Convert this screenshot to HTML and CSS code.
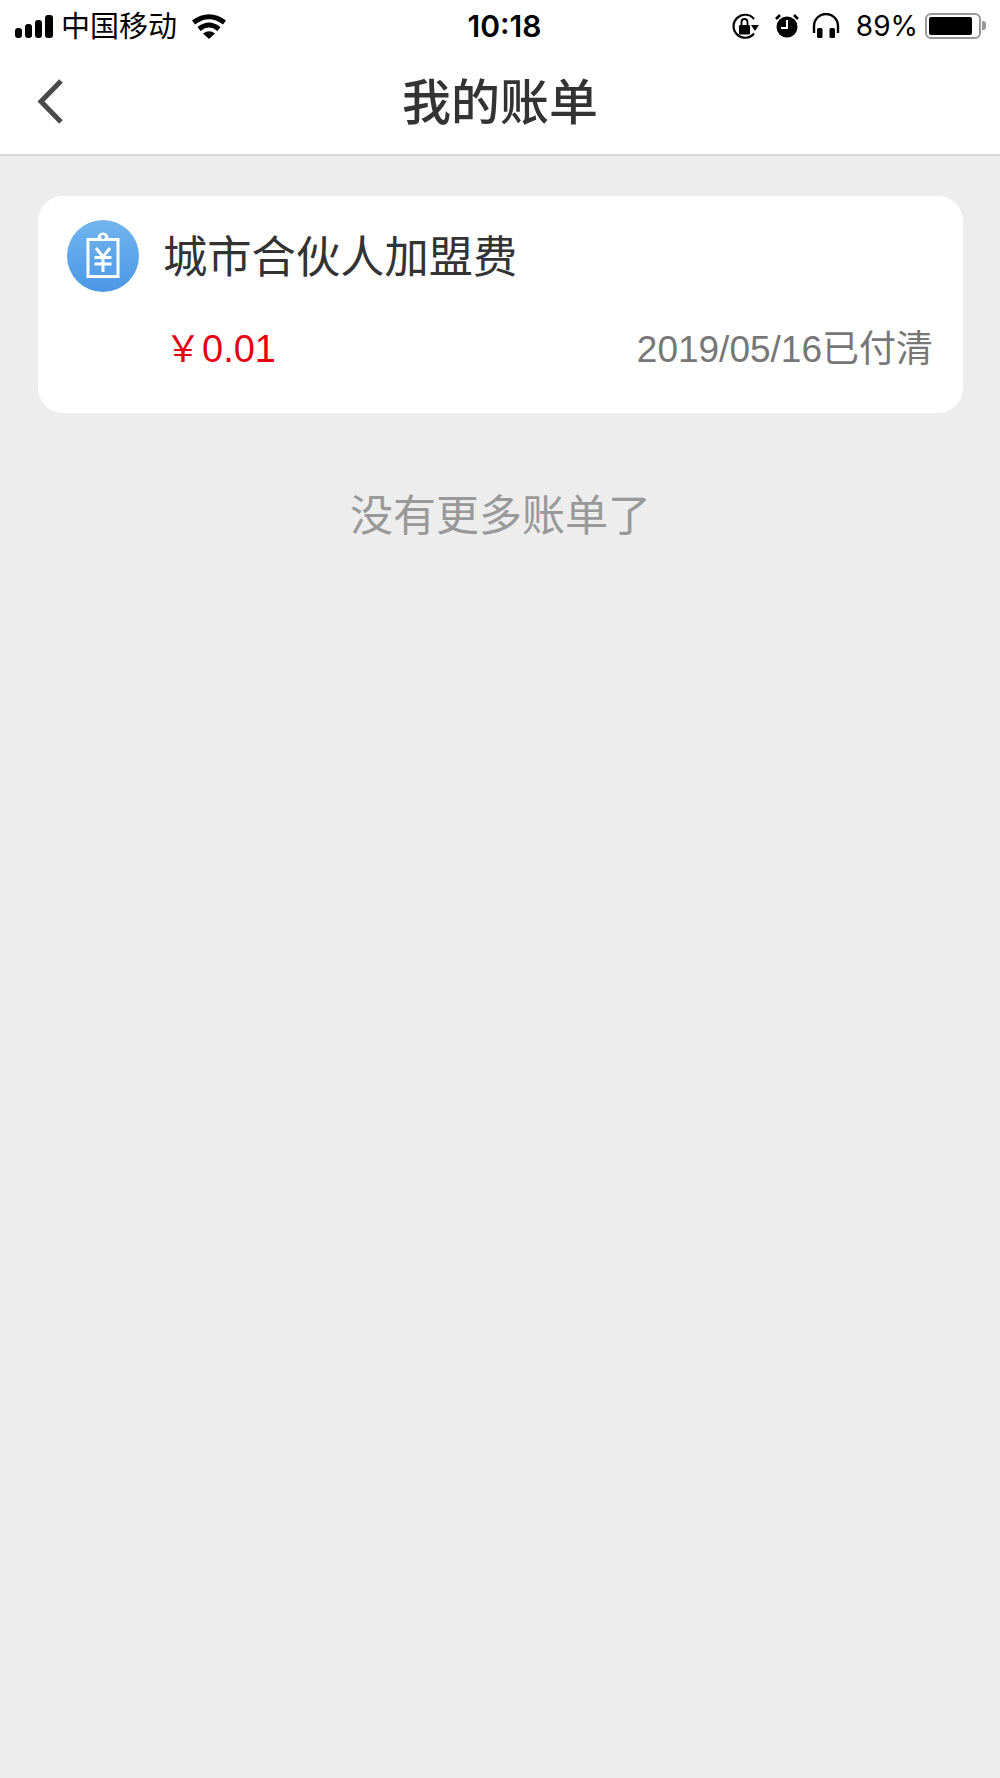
FILE: index.html
```html
<!DOCTYPE html>
<html lang="en">
<head>
    <meta charset="UTF-8">
    <meta name="viewport" content="width=device-width, initial-scale=1.0">
    <title>我的账单</title>
    <link rel="stylesheet" href="styles.css">
</head>
<body>
    <div class="status-bar">
        <div class="status-left">
            <svg class="signal" width="38" height="26" viewBox="0 0 38 26">
                <rect x="0" y="14" width="7" height="10" rx="3"/>
                <rect x="10" y="10" width="7" height="14" rx="3"/>
                <rect x="20" y="6" width="7" height="18" rx="3"/>
                <rect x="30" y="1" width="8" height="23" rx="3"/>
            </svg>
            <span class="carrier">中国移动</span>
            <svg class="wifi" width="34" height="26" viewBox="0 0 34 26">
                <path d="M1.500 8.500 Q17 -3 32.500 8.500" fill="none" stroke="#000" stroke-width="5"/>
                <path d="M7 15 Q17 7 27 15" fill="none" stroke="#000" stroke-width="5"/>
                <path d="M11 19.500 Q17 15 23 19.500 L17 25 Z"/>
            </svg>
        </div>
        <div class="status-time">10:18</div>
        <div class="status-right">
            <svg class="lock" width="29" height="26" viewBox="0 0 29 26">
                <path d="M23 6 A11.500 11.500 0 1 0 23 20.500" fill="none" stroke="#000" stroke-width="2.200"/>
                <path d="M20 12 L28 12 L24 18 Z"/>
                <rect x="8" y="12" width="11" height="9.500" rx="1.200"/>
                <path d="M10.500 12 V9 A3 3 0 0 1 16.500 9 V12" fill="none" stroke="#000" stroke-width="1.800"/>
            </svg>
            <svg class="alarm" width="24" height="26" viewBox="0 0 24 26">
                <circle cx="12" cy="14" r="10.500"/>
                <path d="M1 6 L5 2 M23 6 L19 2" stroke="#000" stroke-width="2.600"/>
                <path d="M12 7 V15 H6" fill="none" stroke="#fff" stroke-width="2"/>
            </svg>
            <svg class="phones" width="28" height="26" viewBox="0 0 28 26">
                <path d="M2 20 V13 A12 12 0 0 1 26 13 V20" fill="none" stroke="#000" stroke-width="2.400"/>
                <rect x="5" y="15" width="5.500" height="10" rx="1.500"/>
                <rect x="17.500" y="15" width="5.500" height="10" rx="1.500"/>
            </svg>
            <span class="battery-pct">89%</span>
            <div class="battery">
                <div class="battery-level"></div>
            </div>
            <div class="battery-tip"></div>
        </div>
    </div>

    <div class="nav-bar">
        <svg class="back" width="28" height="48" viewBox="0 0 28 48">
            <path d="M25 3 L5 23.500 L25 44" fill="none" stroke="#4a4a4a" stroke-width="5"/>
        </svg>
        <h1 class="nav-title">我的账单</h1>
    </div>

    <div class="content">
        <div class="bill-card">
            <div class="bill-top">
                <div class="bill-icon">
                    <svg width="42" height="48" viewBox="0 0 42 48">
                        <rect x="6" y="7.500" width="30" height="37" fill="none" stroke="#fff" stroke-width="3"/>
                        <path d="M13 9 V6 H15.500 A5.500 5.500 0 0 1 26.500 6 H29 V9 Z" fill="#fff"/>
                        <circle cx="21" cy="5" r="2" fill="#62adee"/>
                        <path d="M14 16 L21 25 L28 16 M12.500 25.500 H29.500 M12.500 32 H29.500 M21 25 V40" fill="none" stroke="#fff" stroke-width="3"/>
                    </svg>
                </div>
                <div class="bill-name">城市合伙人加盟费</div>
            </div>
            <div class="bill-bottom">
                <span class="bill-amount"><span class="yen">￥</span>0.01</span>
                <span class="bill-date">2019/05/16已付清</span>
            </div>
        </div>
        <p class="no-more">没有更多账单了</p>
    </div>
</body>
</html>
```

FILE: styles.css
```css
* {
    box-sizing: border-box;
}
html, body {
    margin: 0;
    padding: 0;
}
body {
    width: 1000px;
    height: 1778px;
    overflow: hidden;
    background-color: #ededed;
    font-family: "Liberation Sans", "Noto Sans CJK SC", sans-serif;
}
.status-bar {
    display: grid;
    grid-template-columns: 1fr auto 1fr;
    align-items: center;
    height: 50px;
    padding: 0 0 2px 15px;
    background-color: #fff;
    color: #000;
}
.status-left, .status-right {
    display: flex;
    align-items: center;
}
.status-left {
    padding-top: 3px;
}
.status-right {
    justify-content: flex-end;
    padding-right: 14px;
}
.carrier {
    margin-left: 8px;
    font-size: 29px;
    line-height: 48px;
}
.wifi {
    margin-left: 15px;
}
.status-time {
    margin-right: 6px;
    padding-top: 1px;
    font-family: "Inter", sans-serif;
    font-size: 30px;
    font-weight: 600;
}
.alarm {
    margin-left: 15px;
}
.phones {
    margin-left: 13px;
}
.battery-pct {
    margin-left: 16px;
    font-family: "Inter", sans-serif;
    font-size: 28px;
    font-weight: 400;
}
.battery {
    margin-left: 7px;
    width: 56px;
    height: 26px;
    padding: 2px;
    border: 2px solid #999;
    border-radius: 6px;
}
.battery-level {
    width: 43px;
    height: 100%;
    background-color: #000;
    border-radius: 2px;
}
.battery-tip {
    width: 4px;
    height: 9px;
    margin-left: 1px;
    background-color: #999;
    border-radius: 0 3px 3px 0;
}
.nav-bar {
    display: grid;
    grid-template-columns: 1fr auto 1fr;
    align-items: center;
    height: 106px;
    background-color: #fff;
    border-bottom: 2px solid #d6d6d6;
}
.back {
    margin-left: 36px;
    margin-bottom: 1px;
}
.nav-title {
    margin: 0;
    padding-bottom: 7px;
    font-size: 49px;
    font-weight: 500;
    color: #333;
}
.content {
    padding: 40px 37px 0 38px;
}
.bill-card {
    height: 217px;
    padding: 24px 30px 0 29px;
    background-color: #fff;
    border-radius: 25px;
}
.bill-top {
    display: flex;
    align-items: center;
}
.bill-icon {
    display: flex;
    align-items: center;
    justify-content: center;
    width: 72px;
    height: 72px;
    border-radius: 50%;
    background: linear-gradient(#72b6ef, #4a97e6);
}
.bill-name {
    margin-left: 24px;
    padding-bottom: 4px;
    font-size: 44.300px;
    color: #333;
}
.bill-bottom {
    display: flex;
    justify-content: space-between;
    align-items: center;
    margin-top: 27px;
    padding-left: 98px;
}
.bill-amount {
    font-size: 38px;
    color: #e60012;
}
.yen {
    margin-right: 1px;
    font-size: 36px;
}
.bill-date {
    font-size: 37px;
    color: #777;
}
.no-more {
    margin: 68px 0 0;
    text-align: center;
    font-size: 43px;
    color: #999;
}
```
